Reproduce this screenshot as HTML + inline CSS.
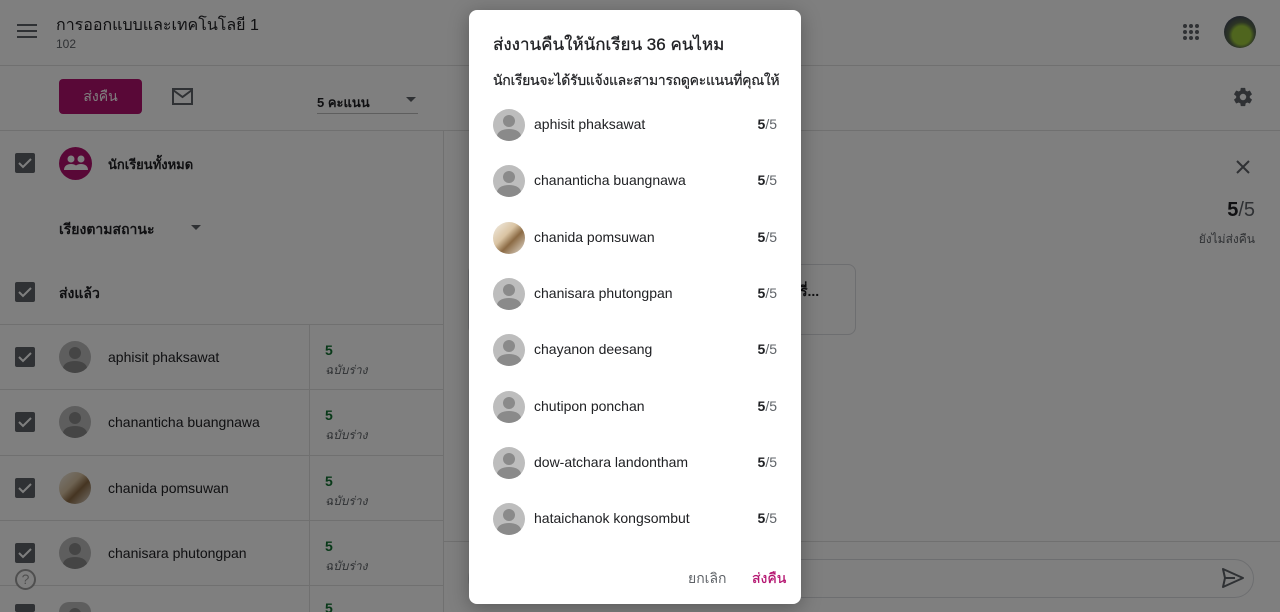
<!DOCTYPE html>
<html style="width:1280px;height:612px;overflow:hidden"><head><meta charset="utf-8">
<style>
*{box-sizing:border-box;margin:0;padding:0}
body{width:1280px;height:612px;overflow:hidden;background:#fff;font-family:"Liberation Sans","Noto Sans CJK SC",sans-serif;color:#202124;position:relative}
.a{position:absolute}
.hl{position:absolute;height:1px;background:#e0e0e0}
.vl{position:absolute;width:1px;background:#e0e0e0}
.cb{position:absolute;width:20px;height:20px;border-radius:2px;background:#5f6368}
.cb svg{position:absolute;left:2px;top:2px}
.av{position:absolute;width:32px;height:32px;border-radius:50%;background:#bdbdbd;overflow:hidden}
.av::before{content:"";position:absolute;left:10px;top:6px;width:12px;height:12px;border-radius:50%;background:#8a8a8a}
.av::after{content:"";position:absolute;left:4px;top:20px;width:24px;height:14px;border-radius:50%;background:#8a8a8a}
.photo{background:linear-gradient(135deg,#f3efe6 0%,#d9c3a2 40%,#8b6a44 60%,#e8e1d6 100%)}
.photo::before,.photo::after{display:none}
.nm{position:absolute;font-size:14px;color:#202124}
.sc{position:absolute;font-size:14px;font-weight:bold;color:#137333}
.dr{position:absolute;font-size:12px;color:#5f6368;font-style:italic}
#ov{position:absolute;left:0;top:0;width:1280px;height:612px;background:rgba(0,0,0,0.5)}
#dlg{position:absolute;left:469px;top:10px;width:332px;height:594px;background:#fff;border-radius:8px;box-shadow:0 4px 20px rgba(0,0,0,.3)}
.it{position:absolute;left:24px;width:284px;height:32px}
.it .av{left:0;top:0}
.it .n{position:absolute;left:41px;top:7px;font-size:14px;color:#202124}
.it .s{position:absolute;right:0;top:7px;font-size:14px;color:#5f6368}
.it .s b{color:#202124}
</style></head><body>
<svg class="a" style="left:17px;top:23px" width="20" height="16"><rect y="1" width="20" height="2" fill="#5f6368"/><rect y="7" width="20" height="2" fill="#5f6368"/><rect y="13" width="20" height="2" fill="#5f6368"/></svg>
<div class="a" style="left:56px;top:13px;font-size:16px;color:#202124">การออกแบบและเทคโนโลยี 1</div>
<div class="a" style="left:56px;top:37px;font-size:12px;color:#5f6368">102</div>
<svg class="a" style="left:1183px;top:24px" width="18" height="18"><g fill="#5f6368"><circle cx="2" cy="2" r="2"/><circle cx="8" cy="2" r="2"/><circle cx="14" cy="2" r="2"/><circle cx="2" cy="8" r="2"/><circle cx="8" cy="8" r="2"/><circle cx="14" cy="8" r="2"/><circle cx="2" cy="14" r="2"/><circle cx="8" cy="14" r="2"/><circle cx="14" cy="14" r="2"/></g></svg>
<div class="a" style="left:1224px;top:16px;width:32px;height:32px;border-radius:50%;background:radial-gradient(circle at 55% 60%,#9ecb3c 0 35%,#5a6b4a 50%,#3a3f5a 80%)"></div>
<div class="hl" style="left:0;top:65px;width:1280px"></div>
<div class="a" style="left:59px;top:79px;width:83px;height:35px;border-radius:4px;background:#b3116e;color:#fff;font-size:14px;text-align:center;line-height:35px">ส่งคืน</div>
<svg class="a" style="left:172px;top:88px" width="21" height="17"><rect x="1" y="1" width="19" height="15" fill="none" stroke="#5f6368" stroke-width="2"/><path d="M1 2l9.5 7L20 2" fill="none" stroke="#5f6368" stroke-width="2"/></svg>
<div class="a" style="left:317px;top:92px;font-size:13px;font-weight:bold;color:#202124">5 คะแนน</div>
<svg class="a" style="left:406px;top:97px" width="10" height="5"><path d="M0 0h10L5 5z" fill="#5f6368"/></svg>
<div class="hl" style="left:317px;top:113px;width:101px;background:#bdbdbd"></div>
<svg class="a" style="left:1232px;top:86px" width="22" height="22" viewBox="0 0 24 24"><path fill="#5f6368" d="M19.4 13c.04-.33.06-.66.06-1s-.02-.67-.06-1l2.1-1.65c.2-.15.25-.42.13-.64l-2-3.46c-.12-.22-.39-.3-.61-.22l-2.49 1c-.52-.4-1.08-.73-1.690-.98l-.38-2.65A.49.49 0 0 0 14 2h-4c-.25 0-.46.18-.49.42l-.38 2.65c-.61.25-1.170.59-1.690.98l-2.49-1a.5.5 0 0 0-.61.22l-2 3.46c-.13.22-.07.49.12.64L4.57 11c-.04.33-.07.67-.07 1s.03.67.07 1l-2.11 1.65c-.19.15-.24.42-.12.64l2 3.46c.12.22.39.3.61.22l2.49-1c.52.4 1.08.73 1.69.98l.38 2.65c.03.24.24.42.49.42h4c.25 0 .46-.18.49-.42l.38-2.65c.61-.25 1.17-.59 1.69-.98l2.49 1c.23.09.49 0 .61-.22l2-3.46c.12-.22.07-.49-.12-.64L19.4 13zM12 15.5a3.5 3.5 0 1 1 0-7 3.5 3.5 0 0 1 0 7z" fill-rule="evenodd"/></svg>
<div class="hl" style="left:0;top:130px;width:1280px"></div>
<div class="vl" style="left:443px;top:130px;height:482px"></div>
<div class="cb" style="left:15px;top:153px"><svg width="16" height="16"><path d="M2 8l4 4 8-8" fill="none" stroke="#fff" stroke-width="2"/></svg></div>
<div class="a" style="left:59px;top:147px;width:33px;height:33px;border-radius:50%;background:#b3116e"></div>
<svg class="a" style="left:64px;top:154px" width="24" height="18"><g fill="#fff"><circle cx="7" cy="5" r="3.5"/><circle cx="17" cy="5" r="3.5"/><path d="M0 16c0-4 3-6 7-6s7 2 7 6z"/><path d="M10 16c0-4 3-6 7-6s7 2 7 6z"/></g></svg>
<div class="a" style="left:108px;top:154px;font-size:13px;font-weight:bold">นักเรียนทั้งหมด</div>
<div class="a" style="left:59px;top:219px;font-size:14px;font-weight:bold">เรียงตามสถานะ</div>
<svg class="a" style="left:191px;top:225px" width="10" height="5"><path d="M0 0h10L5 5z" fill="#5f6368"/></svg>
<div class="cb" style="left:15px;top:282px"><svg width="16" height="16"><path d="M2 8l4 4 8-8" fill="none" stroke="#fff" stroke-width="2"/></svg></div>
<div class="a" style="left:59px;top:283px;font-size:14px;font-weight:bold">ส่งแล้ว</div>
<div class="hl" style="left:0;top:324px;width:443px"></div>
<div class="vl" style="left:309px;top:324px;height:288px"></div>

<div class="cb" style="left:15px;top:347px"><svg width="16" height="16"><path d="M2 8l4 4 8-8" fill="none" stroke="#fff" stroke-width="2"/></svg></div>
<div class="av" style="left:59px;top:341px"></div><div class="nm" style="left:108px;top:349px">aphisit phaksawat</div>
<div class="sc" style="left:325px;top:342px">5</div><div class="dr" style="left:325px;top:361px">ฉบับร่าง</div>
<div class="hl" style="left:0;top:389px;width:443px"></div>

<div class="cb" style="left:15px;top:412px"><svg width="16" height="16"><path d="M2 8l4 4 8-8" fill="none" stroke="#fff" stroke-width="2"/></svg></div>
<div class="av" style="left:59px;top:406px"></div><div class="nm" style="left:108px;top:414px">chananticha buangnawa</div>
<div class="sc" style="left:325px;top:407px">5</div><div class="dr" style="left:325px;top:426px">ฉบับร่าง</div>
<div class="hl" style="left:0;top:455px;width:443px"></div>

<div class="cb" style="left:15px;top:478px"><svg width="16" height="16"><path d="M2 8l4 4 8-8" fill="none" stroke="#fff" stroke-width="2"/></svg></div>
<div class="av photo" style="left:59px;top:472px"></div><div class="nm" style="left:108px;top:480px">chanida pomsuwan</div>
<div class="sc" style="left:325px;top:473px">5</div><div class="dr" style="left:325px;top:492px">ฉบับร่าง</div>
<div class="hl" style="left:0;top:520px;width:443px"></div>

<div class="cb" style="left:15px;top:543px"><svg width="16" height="16"><path d="M2 8l4 4 8-8" fill="none" stroke="#fff" stroke-width="2"/></svg></div>
<div class="av" style="left:59px;top:537px"></div><div class="nm" style="left:108px;top:545px">chanisara phutongpan</div>
<div class="sc" style="left:325px;top:538px">5</div><div class="dr" style="left:325px;top:557px">ฉบับร่าง</div>
<div class="hl" style="left:0;top:585px;width:443px"></div>
<div class="cb" style="left:15px;top:604px;height:8px"></div>
<div class="av" style="left:59px;top:602px;height:10px;border-radius:16px 16px 0 0"></div>
<div class="sc" style="left:325px;top:600px;height:12px;overflow:hidden">5</div>
<div class="a" style="left:15px;top:569px;width:21px;height:21px;border-radius:50%;border:2px solid #9e9e9e;color:#9e9e9e;font-size:14px;text-align:center;line-height:17px;background:#fff">?</div>
<svg class="a" style="left:1236px;top:160px" width="14" height="14"><path d="M1 1l12 12M13 1L1 13" stroke="#5f6368" stroke-width="2"/></svg>
<div class="a" style="right:25px;top:199px;font-size:20px;color:#202124"><b>5</b><span style="color:#5f6368">/5</span></div>
<div class="a" style="right:25px;top:230px;font-size:12px;color:#5f6368">ยังไม่ส่งคืน</div>
<div class="a" style="left:468px;top:264px;width:388px;height:71px;border:1px solid #dadce0;border-radius:8px"></div>
<div class="a" style="left:800px;top:281px;font-size:14px;font-weight:bold">รี่...</div>
<div class="hl" style="left:444px;top:541px;width:836px"></div>
<div class="a" style="left:468px;top:559px;width:786px;height:39px;border:1px solid #dadce0;border-radius:20px"></div>
<svg class="a" style="left:1222px;top:568px" width="22" height="20"><path d="M1 1l20 9-20 9 2-9z M3 10h10" fill="none" stroke="#5f6368" stroke-width="2" stroke-linejoin="round"/></svg>

<div id="ov"></div>
<div id="dlg">
<div class="a" style="left:24px;top:21px;font-size:17px;color:#202124;-webkit-text-stroke:0.3px #202124">ส่งงานคืนให้นักเรียน 36 คนไหม</div>
<div class="a" style="left:24px;top:60px;font-size:14px;color:#202124;letter-spacing:-0.3px;-webkit-text-stroke:0.2px #202124">นักเรียนจะได้รับแจ้งและสามารถดูคะแนนที่คุณให้</div>
<div class="it" style="top:99px"><div class="av"></div><div class="n">aphisit phaksawat</div><div class="s"><b>5</b>/5</div></div>
<div class="it" style="top:155px"><div class="av"></div><div class="n">chananticha buangnawa</div><div class="s"><b>5</b>/5</div></div>
<div class="it" style="top:212px"><div class="av photo"></div><div class="n">chanida pomsuwan</div><div class="s"><b>5</b>/5</div></div>
<div class="it" style="top:268px"><div class="av"></div><div class="n">chanisara phutongpan</div><div class="s"><b>5</b>/5</div></div>
<div class="it" style="top:324px"><div class="av"></div><div class="n">chayanon deesang</div><div class="s"><b>5</b>/5</div></div>
<div class="it" style="top:381px"><div class="av"></div><div class="n">chutipon ponchan</div><div class="s"><b>5</b>/5</div></div>
<div class="it" style="top:437px"><div class="av"></div><div class="n">dow-atchara landontham</div><div class="s"><b>5</b>/5</div></div>
<div class="it" style="top:493px"><div class="av"></div><div class="n">hataichanok kongsombut</div><div class="s"><b>5</b>/5</div></div>
<div class="a" style="left:219px;top:558px;font-size:14px;color:#5f6368">ยกเลิก</div>
<div class="a" style="left:283px;top:558px;font-size:14px;color:#b3116e;-webkit-text-stroke:0.2px #b3116e">ส่งคืน</div>
</div>
</body></html>
